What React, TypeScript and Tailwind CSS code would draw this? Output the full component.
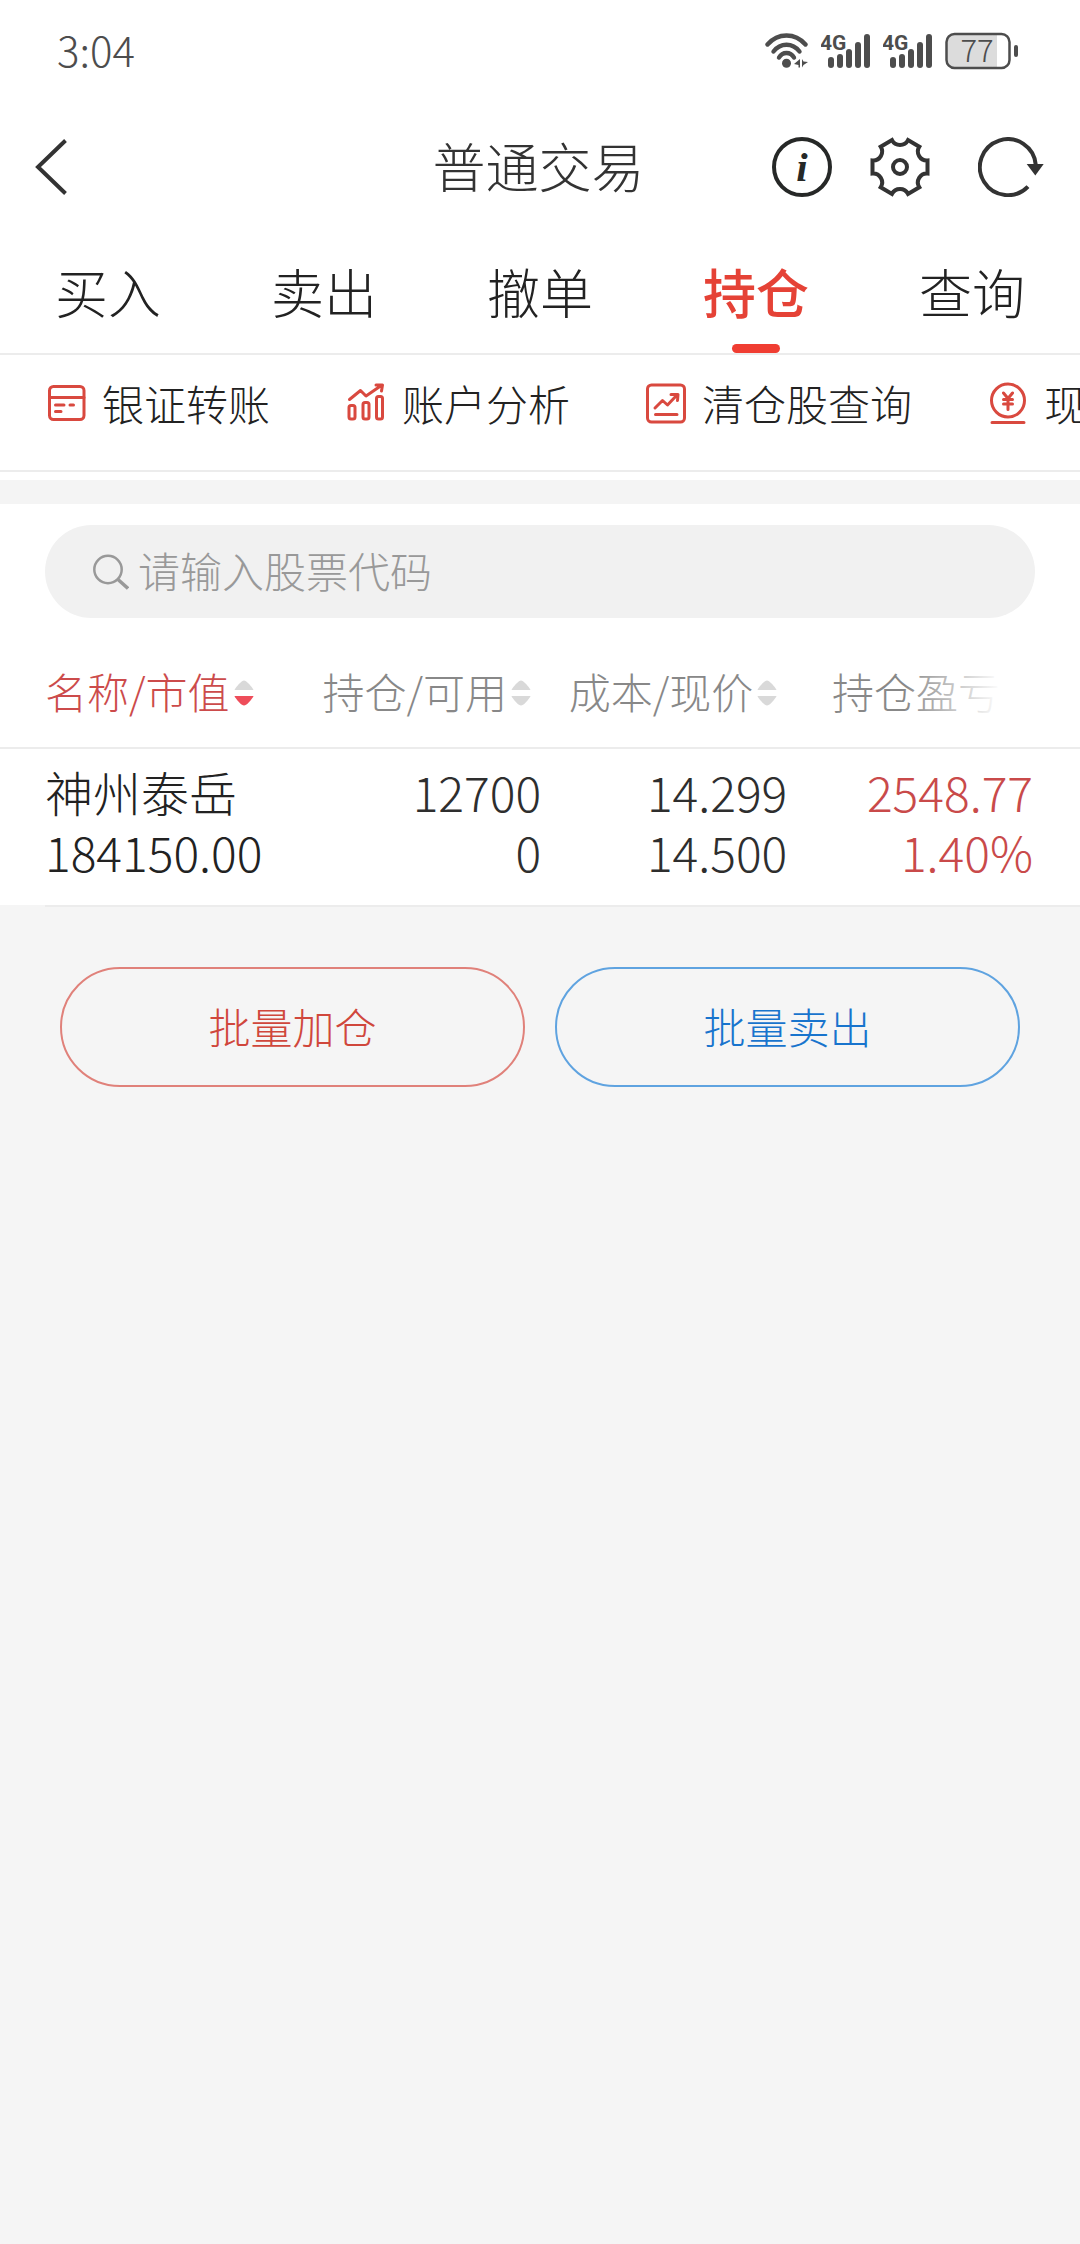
import clsx from "clsx";
import { useState, type ReactNode } from "react";

type SortDir = "none" | "desc";

type Column = {
    label: string;
    sort: SortDir;
};

type Position = {
    name: string;
    marketValue: string;
    held: string;
    available: string;
    cost: string;
    price: string;
    profit: string;
    profitRate: string;
};

const TABS = ["买入", "卖出", "撤单", "持仓", "查询"];

const COLUMNS: Column[] = [
    { label: "名称/市值", sort: "desc" },
    { label: "持仓/可用", sort: "none" },
    { label: "成本/现价", sort: "none" },
    { label: "持仓盈亏", sort: "none" },
];

const POSITIONS: Position[] = [
    {
        name: "神州泰岳",
        marketValue: "184150.00",
        held: "12700",
        available: "0",
        cost: "14.299",
        price: "14.500",
        profit: "2548.77",
        profitRate: "1.40%",
    },
];

function WifiIcon() {
    return (
        <svg className="h-9 w-11" viewBox="0 0 44 36" fill="none" stroke="#4d4d4d" strokeWidth="4.4" strokeLinecap="round">
            <path d="M2.5 11.5C13 -0.5 30 -0.5 40.5 11.5" />
            <path d="M8.5 18.5C15.5 9.5 27.5 9.5 34.5 18.5" />
            <path d="M14 24.5C17.5 18.5 25.5 18.5 29 24.5" />
            <circle cx="21.5" cy="30.2" r="4.5" fill="#4d4d4d" stroke="none" />
            <path d="M29 31L35 26V34.5H33.5V32Z M37 26V34.5L38.5 32L43 29L38.5 28.5Z" fill="#4d4d4d" stroke="none" />
        </svg>
    );
}

function SignalIcon() {
    return (
        <svg className="h-9 w-[50px]" viewBox="0 0 50 36" fill="#4d4d4d">
            <text x="-1" y="17" fontSize="21" fontWeight="700" fontFamily="Roboto, sans-serif">
                4G
            </text>
            <rect x="7" y="24" width="6" height="11" rx="3" />
            <rect x="16" y="21" width="6" height="14" rx="3" />
            <rect x="25" y="16" width="6" height="19" rx="3" />
            <rect x="34" y="9" width="6" height="26" rx="3" />
            <rect x="43" y="1" width="6" height="34" rx="3" />
        </svg>
    );
}

function BatteryIcon({ level }: { level: number }) {
    return (
        <svg className="h-[38px] w-[74px]" viewBox="0 0 74 38">
            <rect x="1.5" y="2" width="50" height="34" rx="8" fill="#dcdcdc" />
            <rect x="48" y="3" width="4" height="32" fill="#dcdcdc" />
            <rect x="1.5" y="2" width="63" height="34" rx="8" fill="none" stroke="#4d4d4d" strokeWidth="2.5" />
            <rect x="69" y="13" width="4" height="12" rx="2" fill="#4d4d4d" />
            <text
                x="32"
                y="30"
                textAnchor="middle"
                fontSize="31"
                fontWeight="300"
                fontFamily="'Noto Sans CJK SC', sans-serif"
                fill="#4d4d4d"
            >
                {level}
            </text>
        </svg>
    );
}

function InfoIcon() {
    return (
        <svg className="size-[60px]" viewBox="0 0 60 60" fill="none">
            <circle cx="30" cy="30" r="28" stroke="#262827" strokeWidth="4" />
            <text
                x="30"
                y="44"
                textAnchor="middle"
                fontSize="41"
                fontWeight="700"
                fontStyle="italic"
                fontFamily="'Liberation Serif', serif"
                fill="#262827"
            >
                i
            </text>
        </svg>
    );
}

function GearIcon() {
    return (
        <svg className="size-[60px]" viewBox="0 0 60 60" fill="none" stroke="#333" strokeWidth="4">
            <path d="M57.5 36.5V23.5A9 9 0 0 1 49.3 9.7L38 3.1A9 9 0 0 1 22 3.1L10.7 9.7A9 9 0 0 1 2.5 23.5V36.5A9 9 0 0 1 10.7 50.3L22 56.9A9 9 0 0 1 38 56.9L49.3 50.3A9 9 0 0 1 57.5 36.5Z" />
            <circle cx="30" cy="30" r="7" />
        </svg>
    );
}

function RefreshIcon() {
    return (
        <svg className="h-[60px] w-[66px]" viewBox="0 0 66 60" fill="none">
            <path d="M57.8 28A28 28 0 1 0 50 49.6" stroke="#333" strokeWidth="4" />
            <path d="M48.7 27H65.7L57.3 38.5Z" fill="#333" />
        </svg>
    );
}

function ShortcutIcon({ children }: { children: ReactNode }) {
    return (
        <svg
            className="size-[42px] shrink-0"
            viewBox="0 0 42 42"
            fill="none"
            stroke="#d9493f"
            strokeWidth="3"
            strokeLinecap="round"
            strokeLinejoin="round"
        >
            {children}
        </svg>
    );
}

const SHORTCUTS = [
    {
        label: "银证转账",
        icon: (
            <ShortcutIcon>
                <rect x="4.5" y="4.5" width="34.5" height="33" rx="4" />
                <path d="M4.5 15.5H39M10.5 23H19M25 23H28.5M10.5 29.5H16" />
            </ShortcutIcon>
        ),
    },
    {
        label: "账户分析",
        icon: (
            <ShortcutIcon>
                <rect x="4" y="23.5" width="6" height="13.5" rx="2" />
                <rect x="18" y="20.5" width="6" height="16.5" rx="2" />
                <rect x="31.5" y="14.5" width="6" height="22.5" rx="2" />
                <path d="M4.5 17.5L15.5 8.5L21 14L37 3M31 3H37.5L36.5 9" />
            </ShortcutIcon>
        ),
    },
    {
        label: "清仓股查询",
        icon: (
            <ShortcutIcon>
                <rect x="2.5" y="3" width="37" height="37" rx="4" />
                <path d="M10 26L17.5 18.5L22.5 23L32 13M26 12.5H33L32.5 18.5M10.5 32.5H32" />
            </ShortcutIcon>
        ),
    },
    {
        label: "现金理财",
        icon: (
            <ShortcutIcon>
                <circle cx="21" cy="18.5" r="16.5" />
                <path d="M5 40.5H37M16.5 11L21 16.5L25.5 11M16.5 17.5H25.5M16.5 22H25.5M21 16.5V27.5" />
            </ShortcutIcon>
        ),
    },
];

function SearchIcon() {
    return (
        <svg className="size-9 shrink-0" viewBox="0 0 36 36" fill="none" stroke="#999" strokeWidth="2.5">
            <circle cx="15" cy="15.5" r="13.7" />
            <path d="M25 25.5L35 34.5" strokeWidth="3.5" />
        </svg>
    );
}

function SortIcon({ dir }: { dir: SortDir }) {
    return (
        <svg className="h-[26px] w-5 shrink-0" viewBox="0 0 20 26">
            <path d="M0.5 10C1 8 6 2.5 8 1.2Q10 0 12 1.2C14 2.5 19 8 19.5 10Z" fill="#d9d9d9" />
            <path
                d="M0.5 16C1 18 6 23.5 8 24.8Q10 26 12 24.8C14 23.5 19 18 19.5 16Z"
                fill={dir === "desc" ? "#ee4d5a" : "#d9d9d9"}
            />
        </svg>
    );
}

function StatusBar() {
    return (
        <div className="flex h-[102px] items-center justify-between pr-[61px] pl-[57px] text-[#4d4d4d]">
            <span className="pb-1.5 text-[42px]">3:04</span>
            <div className="flex items-center gap-3">
                <WifiIcon />
                <SignalIcon />
                <SignalIcon />
                <BatteryIcon level={77} />
            </div>
        </div>
    );
}

function TitleBar() {
    return (
        <header className="grid h-[130px] grid-cols-[1fr_auto_1fr] items-center pr-9 pl-[33px]">
            <button type="button" aria-label="返回" className="justify-self-start">
                <svg className="h-[58px] w-9" viewBox="0 0 36 58" fill="none" stroke="#333" strokeWidth="4">
                    <path d="M32.5 2.5L5 29L32.5 55.5" />
                </svg>
            </button>
            <h1 className="pb-0.5 text-[53px] text-[#333]">普通交易</h1>
            <div className="flex items-center justify-self-end">
                <button type="button" aria-label="说明">
                    <InfoIcon />
                </button>
                <button type="button" aria-label="设置" className="ml-[38px]">
                    <GearIcon />
                </button>
                <button type="button" aria-label="刷新" className="ml-12">
                    <RefreshIcon />
                </button>
            </div>
        </header>
    );
}

function TradeTabs({ active, onChange }: { active: string; onChange: (tab: string) => void }) {
    return (
        <nav className="grid h-[123px] grid-cols-5 border-b-2 border-[#ececec]">
            {TABS.map((tab) => (
                <button
                    key={tab}
                    type="button"
                    onClick={() => onChange(tab)}
                    className={clsx(
                        "relative pb-0.5 text-[53px]",
                        tab === active ? "font-medium text-[#e54236]" : "text-[#222]"
                    )}
                >
                    {tab}
                    {tab === active && (
                        <span className="absolute bottom-0 left-1/2 h-[9px] w-12 -translate-x-1/2 rounded-full bg-[#f03d32]" />
                    )}
                </button>
            ))}
        </nav>
    );
}

function Shortcuts() {
    return (
        <div className="flex gap-[75px] overflow-hidden border-b-2 border-[#ececec] pt-[18px] pb-[37px] pl-[45px]">
            {SHORTCUTS.map((item) => (
                <button
                    key={item.label}
                    type="button"
                    className="flex shrink-0 items-center gap-[15px] text-[42px] leading-[60px] text-[#222]"
                >
                    {item.icon}
                    {item.label}
                </button>
            ))}
        </div>
    );
}

function SearchBox() {
    return (
        <div className="px-[45px] py-[21px]">
            <label className="flex h-[93px] items-center gap-[9px] rounded-full bg-[#f1f1f1] px-12">
                <SearchIcon />
                <input
                    type="text"
                    aria-label="股票代码"
                    placeholder="请输入股票代码"
                    className="min-w-0 flex-1 pb-1 text-[42px] leading-[60px] outline-none placeholder:text-[#999]"
                />
            </label>
        </div>
    );
}

function PositionTable() {
    return (
        <table className="w-full table-fixed">
            <colgroup>
                <col className="w-[27.3%]" />
                <col className="w-[22.8%]" />
                <col className="w-[22.8%]" />
                <col />
            </colgroup>
            <thead>
                <tr className="h-[109px] border-b-2 border-[#ececec]">
                    {COLUMNS.map((col, i) => (
                        <th
                            key={col.label}
                            className={clsx(
                                "relative font-light",
                                i === 0 && "pl-[45px]",
                                (i === 1 || i === 2) && "pr-2.5",
                                i === 3 && "pr-14"
                            )}
                        >
                            <button
                                type="button"
                                className={clsx(
                                    "flex items-center gap-1 text-[42px] leading-[60px] whitespace-nowrap",
                                    i > 0 && "ml-auto",
                                    col.sort === "desc" ? "text-[#cc4b4b]" : "text-[#888]"
                                )}
                            >
                                <span className="pb-1">{col.label}</span>
                                <SortIcon dir={col.sort} />
                            </button>
                            {/* the last column fades out towards the edge */}
                            {i === 3 && (
                                <span className="pointer-events-none absolute inset-y-0 right-0 w-44 bg-linear-to-r from-transparent to-white to-55%" />
                            )}
                        </th>
                    ))}
                </tr>
            </thead>
            <tbody>
                {POSITIONS.map((p) => (
                    <tr key={p.name} className="text-right text-[48px] leading-[60px] text-[#2e2e2e]">
                        <td className="pt-3 pb-6 pl-[45px] text-left text-[#222]">
                            <div>{p.name}</div>
                            <div>{p.marketValue}</div>
                        </td>
                        <td className="pt-3 pb-6">
                            <div>{p.held}</div>
                            <div>{p.available}</div>
                        </td>
                        <td className="pt-3 pb-6">
                            <div>{p.cost}</div>
                            <div>{p.price}</div>
                        </td>
                        <td className="pt-3 pr-[47px] pb-6 text-[#c94a4a]">
                            <div>{p.profit}</div>
                            <div>{p.profitRate}</div>
                        </td>
                    </tr>
                ))}
            </tbody>
        </table>
    );
}

export default function App() {
    const [tab, setTab] = useState("持仓");

    return (
        <div className="min-h-screen bg-[#f5f5f5] font-['Noto_Sans_CJK_SC',sans-serif] font-light">
            <div className="bg-white">
                <StatusBar />
                <TitleBar />
                <TradeTabs active={tab} onChange={setTab} />
                <Shortcuts />
                <div className="mt-2 h-6 bg-[#f4f4f4]" />
                <SearchBox />
                <PositionTable />
            </div>
            <div className="ml-[45px] h-0.5 bg-[#ececec]" />
            <div className="grid grid-cols-2 gap-[30px] px-[60px] pt-[60px] text-[42px]">
                <button type="button" className="h-[120px] rounded-full border-2 border-[#e0817a] pb-1 text-[#d0473c]">
                    批量加仓
                </button>
                <button type="button" className="h-[120px] rounded-full border-2 border-[#5fa3e0] pb-1 text-[#1874cd]">
                    批量卖出
                </button>
            </div>
        </div>
    );
}
